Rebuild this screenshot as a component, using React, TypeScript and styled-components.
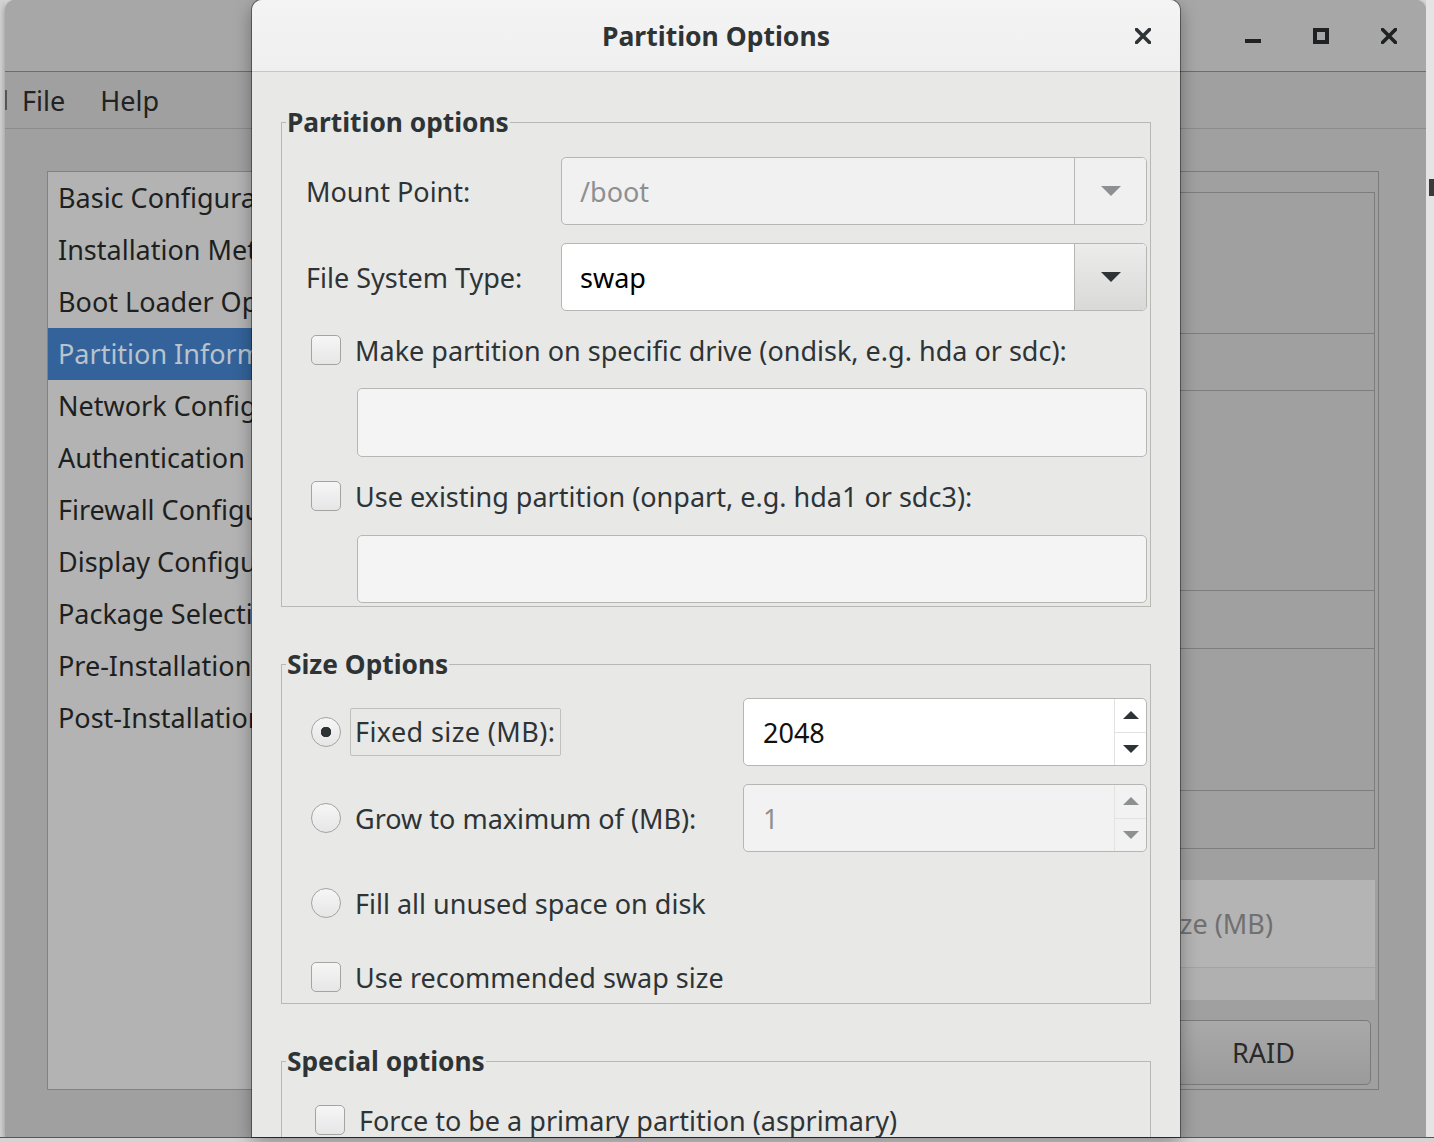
import React from "react";
import styled, { createGlobalStyle } from "styled-components";

const FONT = `"Noto Sans", "DejaVu Sans", sans-serif`;

const GlobalStyle = createGlobalStyle`
  *, *::before, *::after {
    box-sizing: border-box;
  }
  html, body {
    margin: 0;
    padding: 0;
    background: #d9d9d9;
  }
  body {
    font-family: ${FONT};
    font-size: 27px;
    color: #2e3436;
  }
`;

const SECTIONS = [
  "Basic Configuration",
  "Installation Method",
  "Boot Loader Options",
  "Partition Information",
  "Network Configuration",
  "Authentication",
  "Firewall Configuration",
  "Display Configuration",
  "Package Selection",
  "Pre-Installation Script",
  "Post-Installation Script",
];

const Arrow = ({ dir, color, w = 18, h = 9 }: { dir: "up" | "down"; color: string; w?: number; h?: number }) => (
  <svg width={w} height={h} viewBox={`0 0 ${w} ${h}`}>
    <path d={dir === "down" ? `M0 0H${w}L${w / 2} ${h}Z` : `M0 ${h}H${w}L${w / 2} 0Z`} fill={color} />
  </svg>
);

const CloseIcon = ({ color }: { color: string }) => (
  <svg width="16" height="16" viewBox="0 0 16 16">
    <path d="M1.5 1.5L14.5 14.5M14.5 1.5L1.5 14.5" stroke={color} strokeWidth="3.6" strokeLinecap="square" />
  </svg>
);

const MinIcon = () => (
  <svg width="16" height="16" viewBox="0 0 16 16">
    <rect x="0" y="11" width="16" height="4" fill="#1f2123" />
  </svg>
);

const MaxIcon = () => (
  <svg width="16" height="16" viewBox="0 0 16 16">
    <rect x="2" y="2" width="12" height="12" fill="none" stroke="#1f2123" strokeWidth="4" />
  </svg>
);

const Screen = styled.div`
  width: 1434px;
  height: 1142px;
  position: relative;
  overflow: hidden;
  display: flex;
  flex-direction: column;
`;

const Desk = styled.div`
  height: 1137px;
  flex-shrink: 0;
  display: flex;
`;

const BottomStrip = styled.div`
  flex: 1;
  border-top: 1px solid #555;
  background: #d4d4d4;
`;

const LeftEdge = styled.div`
  width: 5px;
  background: #d2d2d2;
`;

const RightEdge = styled.div`
  flex: 1;
  background: #e4e4e4;
  padding-top: 179px;
`;

const EdgeMark = styled.div`
  margin-left: 3px;
  width: 5px;
  height: 17px;
  background: #3a3a3a;
`;

const MainWindow = styled.div`
  width: 1422px;
  display: flex;
  flex-direction: column;
  background: #a0a0a0;
  border-radius: 10px 10px 0 0;
  overflow: hidden;
  box-shadow: 0 2px 6px rgba(0, 0, 0, 0.35);
`;

const TitleBar = styled.div`
  height: 72px;
  flex-shrink: 0;
  border-bottom: 1px solid #6c6c6c;
  background: #a7a7a7;
  display: flex;
  justify-content: flex-end;
  align-items: center;
  padding-right: 3px;
`;

const WinButton = styled.div`
  width: 68px;
  height: 71px;
  display: flex;
  align-items: center;
  justify-content: center;
`;

const MenuBar = styled.div`
  height: 57px;
  flex-shrink: 0;
  border-bottom: 1px solid #8b8b8b;
  display: flex;
  align-items: center;
  gap: 35px;
`;

const Grip = styled.div`
  width: 2px;
  height: 20px;
  background: #555;
  margin-right: -20px;
`;

const MenuItem = styled.div`
  color: #222;
  &:first-of-type {
    margin-left: 17px;
  }
`;

const Workspace = styled.div`
  flex: 1;
  min-height: 0;
  display: flex;
  padding: 42px 47px 47px 42px;
  gap: 20px;
`;

const Sidebar = styled.div`
  width: 265px;
  flex-shrink: 0;
  background: #b3b3b3;
  border: 1px solid #828282;
  overflow: hidden;
`;

const SideItem = styled.div<{ $active?: boolean }>`
  height: 52px;
  line-height: 52px;
  padding-left: 10px;
  white-space: nowrap;
  color: ${(p) => (p.$active ? "#b9c3cd" : "#1e1f20")};
  background: ${(p) => (p.$active ? "#33639a" : "transparent")};
`;

const RightPane = styled.div`
  flex: 1;
  border: 1px solid #7b7b7b;
  padding: 20px 3px 0 0;
  display: flex;
  flex-direction: column;
`;

const PaneBox = styled.div<{ $h: number }>`
  height: ${(p) => p.$h}px;
  flex-shrink: 0;
  border: 1px solid #7d7d7d;
  & + & {
    margin-top: -1px;
  }
`;

const ListBox = styled.div`
  margin-top: 31px;
  height: 120px;
  flex-shrink: 0;
  display: flex;
  flex-direction: column;
`;

const ListHeader = styled.div`
  height: 88px;
  background: #b4b4b4;
  border-bottom: 1px solid #a3a3a3;
  display: flex;
  align-items: center;
  justify-content: flex-end;
  padding-right: 102px;
  color: #707070;
`;

const ListRow = styled.div`
  flex: 1;
  background: #b0b0b0;
`;

const PaneButtons = styled.div`
  display: flex;
  justify-content: flex-end;
  padding: 20px 4px 0 0;
`;

const PaneButton = styled.div`
  width: 215px;
  height: 65px;
  border: 1px solid #7a7a7a;
  border-radius: 5px;
  background: linear-gradient(#a9a9a9, #9b9b9b);
  display: flex;
  align-items: center;
  justify-content: center;
  color: #2a2a2a;
`;

/* dialog */

const Dialog = styled.div`
  position: absolute;
  left: 252px;
  top: 0;
  width: 928px;
  height: 1137px;
  overflow: hidden;
  background: #e8e8e7;
  border-radius: 10px 10px 0 0;
  box-shadow: 0 0 0 1px rgba(0, 0, 0, 0.4), 0 6px 18px rgba(0, 0, 0, 0.35);
`;

const DialogTitle = styled.div`
  height: 72px;
  border-bottom: 1px solid #c6c6c4;
  background: linear-gradient(#f4f4f4, #efefef);
  display: grid;
  grid-template-columns: 1fr auto 1fr;
  align-items: center;
`;

const TitleText = styled.div`
  grid-column: 2;
  font-weight: bold;
  font-size: 26.5px;
  color: #2e3436;
`;

const TitleClose = styled.div`
  justify-self: end;
  width: 68px;
  margin-right: 3px;
  display: flex;
  justify-content: center;
`;

const DialogBody = styled.div`
  padding: 32px 29px 0;
  display: flex;
  flex-direction: column;
  gap: 39px;
`;

const Frame = styled.fieldset`
  margin: 0;
  min-width: 0;
  border: 1px solid #b8b8b5;
  padding: 0 3px 3px 4px;
`;

const Legend = styled.legend`
  padding: 0 1px;
  font-weight: bold;
  font-size: 26.3px;
  line-height: 36px;
  color: #2e3436;
`;

const FrameContent = styled.div<{ $top: number }>`
  padding: ${(p) => p.$top}px 0 0 20px;
  display: flex;
  flex-direction: column;
`;

const FieldRow = styled.div<{ $label: number; $gap?: number }>`
  display: grid;
  grid-template-columns: ${(p) => p.$label}px 1fr;
  align-items: center;
  height: 68px;
  margin-top: ${(p) => p.$gap ?? 0}px;
`;

const CheckRow = styled.div<{ $gap?: number; $indent?: number }>`
  display: flex;
  align-items: center;
  height: 46px;
  margin-top: ${(p) => p.$gap ?? 0}px;
  margin-left: ${(p) => 5 + (p.$indent ?? 0)}px;
  gap: 14px;
  white-space: nowrap;
`;

const Check = styled.span`
  width: 30px;
  height: 30px;
  flex-shrink: 0;
  border: 1px solid #a4a4a1;
  border-radius: 5px;
  background: linear-gradient(#f6f6f6, #e6e6e6);
`;

const Radio = styled.span<{ $on?: boolean }>`
  width: 30px;
  height: 30px;
  flex-shrink: 0;
  border: 1px solid #a4a4a1;
  border-radius: 50%;
  background: ${(p) =>
    p.$on
      ? "radial-gradient(circle, #2e3436 0 5px, transparent 5.5px), linear-gradient(#f6f6f6, #e6e6e6)"
      : "linear-gradient(#f6f6f6, #e6e6e6)"};
`;

const FocusLabel = styled.span`
  border: 1px solid #c0c0bd;
  border-radius: 2px;
  padding: 4px 5px 5px 4px;
  margin-left: -5px;
  letter-spacing: 0.4px;
`;

const Combo = styled.div<{ $disabled?: boolean }>`
  height: 68px;
  display: flex;
  border: 1px solid #b6b6b3;
  border-radius: 5px;
  overflow: hidden;
  background: ${(p) => (p.$disabled ? "#f1f1f1" : "#fff")};
`;

const ComboText = styled.div<{ $disabled?: boolean }>`
  flex: 1;
  display: flex;
  align-items: center;
  padding-left: 18px;
  color: ${(p) => (p.$disabled ? "#8d9091" : "#000")};
`;

const ComboButton = styled.div<{ $disabled?: boolean }>`
  width: 72px;
  border-left: 1px solid #b6b6b3;
  display: flex;
  align-items: center;
  justify-content: center;
  background: ${(p) => (p.$disabled ? "#f0f0f0" : "linear-gradient(#ececec, #d9d9d8)")};
`;

const Entry = styled.div<{ $gap: number; $h: number }>`
  height: ${(p) => p.$h}px;
  margin-top: ${(p) => p.$gap}px;
  margin-left: 51px;
  border: 1px solid #b6b6b3;
  border-radius: 5px;
  background: #f4f4f4;
`;

const Spin = styled.div<{ $disabled?: boolean }>`
  height: 68px;
  display: flex;
  border: 1px solid #b6b6b3;
  border-radius: 5px;
  overflow: hidden;
  background: ${(p) => (p.$disabled ? "#f2f2f2" : "#fff")};
`;

const SpinText = styled.div<{ $disabled?: boolean }>`
  flex: 1;
  display: flex;
  align-items: center;
  padding-left: 19px;
  color: ${(p) => (p.$disabled ? "#8d9091" : "#111")};
`;

const SpinButtons = styled.div`
  width: 32px;
  border-left: 1px solid #e2e2e0;
  display: flex;
  flex-direction: column;
`;

const SpinStep = styled.div`
  flex: 1;
  display: flex;
  align-items: center;
  justify-content: center;
  & + & {
    border-top: 1px solid #e2e2e0;
  }
`;

const RadioLabel = styled.div`
  display: flex;
  align-items: center;
  gap: 14px;
  margin-left: 5px;
  white-space: nowrap;
`;

const SpinField = ({ value, disabled }: { value: string; disabled?: boolean }) => {
  const c = disabled ? "#8d9091" : "#2e3436";
  return (
    <Spin $disabled={disabled}>
      <SpinText $disabled={disabled}>{value}</SpinText>
      <SpinButtons>
        <SpinStep>
          <Arrow dir="up" color={c} w={16} h={8} />
        </SpinStep>
        <SpinStep>
          <Arrow dir="down" color={c} w={16} h={8} />
        </SpinStep>
      </SpinButtons>
    </Spin>
  );
};

export default function App() {
  return (
    <>
      <GlobalStyle />
      <Screen>
        <Desk>
          <LeftEdge />
          <MainWindow>
            <TitleBar>
              <WinButton>
                <MinIcon />
              </WinButton>
              <WinButton>
                <MaxIcon />
              </WinButton>
              <WinButton>
                <CloseIcon color="#1f2123" />
              </WinButton>
            </TitleBar>
            <MenuBar>
              <Grip />
              <MenuItem>File</MenuItem>
              <MenuItem>Help</MenuItem>
            </MenuBar>
            <Workspace>
              <Sidebar>
                {SECTIONS.map((s) => (
                  <SideItem key={s} $active={s === "Partition Information"}>
                    {s}
                  </SideItem>
                ))}
              </Sidebar>
              <RightPane>
                <PaneBox $h={142} />
                <PaneBox $h={58} />
                <PaneBox $h={201} />
                <PaneBox $h={59} />
                <PaneBox $h={143} />
                <PaneBox $h={59} />
                <ListBox>
                  <ListHeader>Size (MB)</ListHeader>
                  <ListRow />
                </ListBox>
                <PaneButtons>
                  <PaneButton>RAID</PaneButton>
                </PaneButtons>
              </RightPane>
            </Workspace>
          </MainWindow>
          <RightEdge>
            <EdgeMark />
          </RightEdge>
        </Desk>
        <BottomStrip />

        <Dialog>
          <DialogTitle>
            <TitleText>Partition Options</TitleText>
            <TitleClose>
              <CloseIcon color="#2e3436" />
            </TitleClose>
          </DialogTitle>
          <DialogBody>
            <Frame>
              <Legend>Partition options</Legend>
              <FrameContent $top={17}>
                <FieldRow $label={255}>
                  <span>Mount Point:</span>
                  <Combo $disabled>
                    <ComboText $disabled>/boot</ComboText>
                    <ComboButton $disabled>
                      <Arrow dir="down" color="#8d9091" w={20} h={10} />
                    </ComboButton>
                  </Combo>
                </FieldRow>
                <FieldRow $label={255} $gap={18}>
                  <span>File System Type:</span>
                  <Combo>
                    <ComboText>swap</ComboText>
                    <ComboButton>
                      <Arrow dir="down" color="#2e3436" w={20} h={10} />
                    </ComboButton>
                  </Combo>
                </FieldRow>
                <CheckRow $gap={16}>
                  <Check />
                  <span>Make partition on specific drive (ondisk, e.g. hda or sdc):</span>
                </CheckRow>
                <Entry $gap={15} $h={69} />
                <CheckRow $gap={16}>
                  <Check />
                  <span>Use existing partition (onpart, e.g. hda1 or sdc3):</span>
                </CheckRow>
                <Entry $gap={16} $h={68} />
              </FrameContent>
            </Frame>

            <Frame>
              <Legend>Size Options</Legend>
              <FrameContent $top={16}>
                <FieldRow $label={437}>
                  <RadioLabel>
                    <Radio $on />
                    <FocusLabel>Fixed size (MB):</FocusLabel>
                  </RadioLabel>
                  <SpinField value="2048" />
                </FieldRow>
                <FieldRow $label={437} $gap={18}>
                  <RadioLabel>
                    <Radio />
                    <span>Grow to maximum of (MB):</span>
                  </RadioLabel>
                  <SpinField value="1" disabled />
                </FieldRow>
                <FieldRow $label={437} $gap={17}>
                  <RadioLabel>
                    <Radio />
                    <span>Fill all unused space on disk</span>
                  </RadioLabel>
                </FieldRow>
                <CheckRow $gap={17}>
                  <Check />
                  <span>Use recommended swap size</span>
                </CheckRow>
              </FrameContent>
            </Frame>

            <Frame>
              <Legend>Special options</Legend>
              <FrameContent $top={18}>
                <CheckRow $indent={4}>
                  <Check />
                  <span>Force to be a primary partition (asprimary)</span>
                </CheckRow>
              </FrameContent>
            </Frame>
          </DialogBody>
        </Dialog>
      </Screen>
    </>
  );
}
